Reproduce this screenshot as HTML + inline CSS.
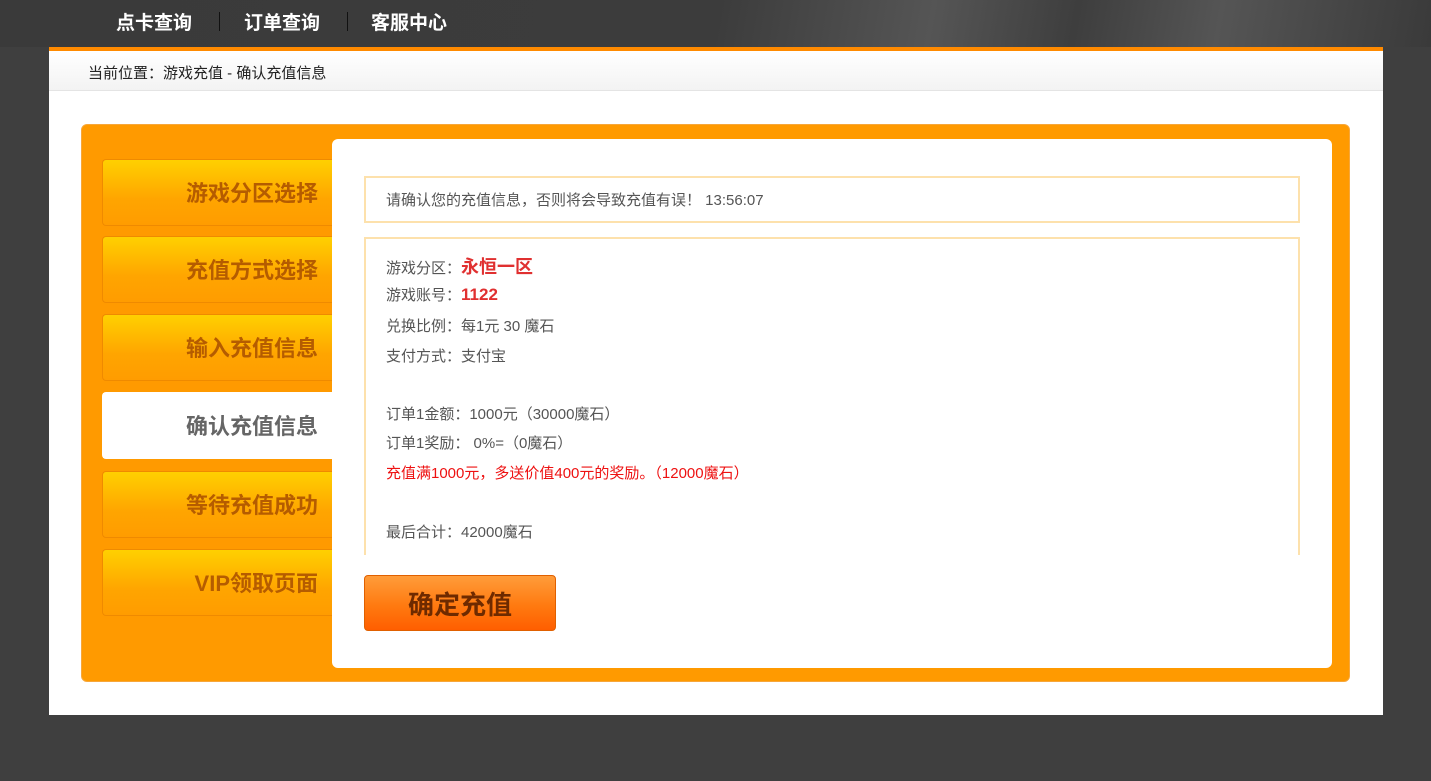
<!DOCTYPE html>
<html><head><meta charset="utf-8"><style>
*{margin:0;padding:0;box-sizing:border-box}
body{width:1431px;height:781px;background:#3f3f3f;font-family:"Liberation Sans","Noto Sans CJK SC",sans-serif;position:relative;overflow:hidden}
.top{position:absolute;left:0;top:0;width:1431px;height:47px;background:linear-gradient(100deg,#3a3a3a 0%,#3c3c3c 50%,#555 65%,#3e3e3e 75%,#555 85%,#3a3a3a 100%)}
.nav{position:absolute;top:8px;font-size:19px;font-weight:bold;color:#fff}
.sep{position:absolute;top:12px;width:1px;height:19px;background:#111}
.line{position:absolute;left:49px;top:47px;width:1334px;height:4px;background:#ff8a00}
.panel{position:absolute;left:49px;top:51px;width:1334px;height:664px;background:#fff}
.crumb{position:absolute;left:0;top:0;width:1334px;height:40px;background:linear-gradient(#fff,#f3f3f3);border-bottom:1px solid #e4e4e4;font-size:15px;color:#222;padding:11px 0 0 39px}
.box{position:absolute;left:32px;top:73px;width:1269px;height:558px;background:#ff9a00;border-radius:6px;border:1px solid #f7a73a}
.tab{position:absolute;left:20px;width:230px;height:67px;background:linear-gradient(#ffd000,#ffa500 60%,#ff9c00);border:1px solid #ef8a00;border-right:none;border-radius:4px 0 0 4px;font-size:22px;font-weight:bold;color:#b55c00;text-align:right;padding:16px 14px 0 0}
.tab.on{background:#fff;color:#666;border-color:#fff}
.content{position:absolute;left:250px;top:14px;width:1000px;height:529px;background:#fff;border-radius:6px}
.notice{position:absolute;left:32px;top:37px;width:936px;height:47px;border:2px solid #fde1ac;font-size:15px;color:#555;padding:11px 0 0 20px}
.info{position:absolute;left:32px;top:98px;width:936px;height:318px;border:2px solid #fde1ac;border-bottom:none}
.l{position:absolute;left:20px;font-size:15px;color:#555;white-space:nowrap}
.red{color:#e03030;font-weight:bold}
.btn{position:absolute;left:32px;top:436px;width:192px;height:56px;border-radius:4px;border:1px solid #e06000;background:linear-gradient(#ff9c3a,#ff7a10 55%,#ff5e00);font-size:26px;font-weight:bold;color:#6e2a00;text-align:center;padding-top:9px}
</style></head><body>
<div class="top"></div>
<div class="nav" style="left:116px">点卡查询</div><div class="sep" style="left:219px"></div>
<div class="nav" style="left:244px">订单查询</div><div class="sep" style="left:347px"></div>
<div class="nav" style="left:371px">客服中心</div>
<div class="line"></div>
<div class="panel">
<div class="crumb">当前位置：游戏充值 - 确认充值信息</div>
<div class="box">
<div class="tab" style="top:34px">游戏分区选择</div>
<div class="tab" style="top:111px">充值方式选择</div>
<div class="tab" style="top:189px">输入充值信息</div>
<div class="tab on" style="top:267px">确认充值信息</div>
<div class="tab" style="top:346px">等待充值成功</div>
<div class="tab" style="top:424px">VIP领取页面</div>
<div class="content">
<div class="notice">请确认您的充值信息，否则将会导致充值有误！ 13:56:07</div>
<div class="info">
<div class="l" style="top:14px">游戏分区：<span class="red" style="font-size:18px">永恒一区</span></div>
<div class="l" style="top:45px">游戏账号：<span class="red" style="font-size:17px">1122</span></div>
<div class="l" style="top:76px">兑换比例：每1元 30 魔石</div>
<div class="l" style="top:106px">支付方式：支付宝</div>
<div class="l" style="top:164px">订单1金额：1000元（30000魔石）</div>
<div class="l" style="top:193px">订单1奖励： 0%=（0魔石）</div>
<div class="l" style="top:223px;color:#ee1111">充值满1000元，多送价值400元的奖励。（12000魔石）</div>
<div class="l" style="top:282px">最后合计：42000魔石</div>
</div>
<div class="btn">确定充值</div>
</div>
</div>
</div>
</body></html>
